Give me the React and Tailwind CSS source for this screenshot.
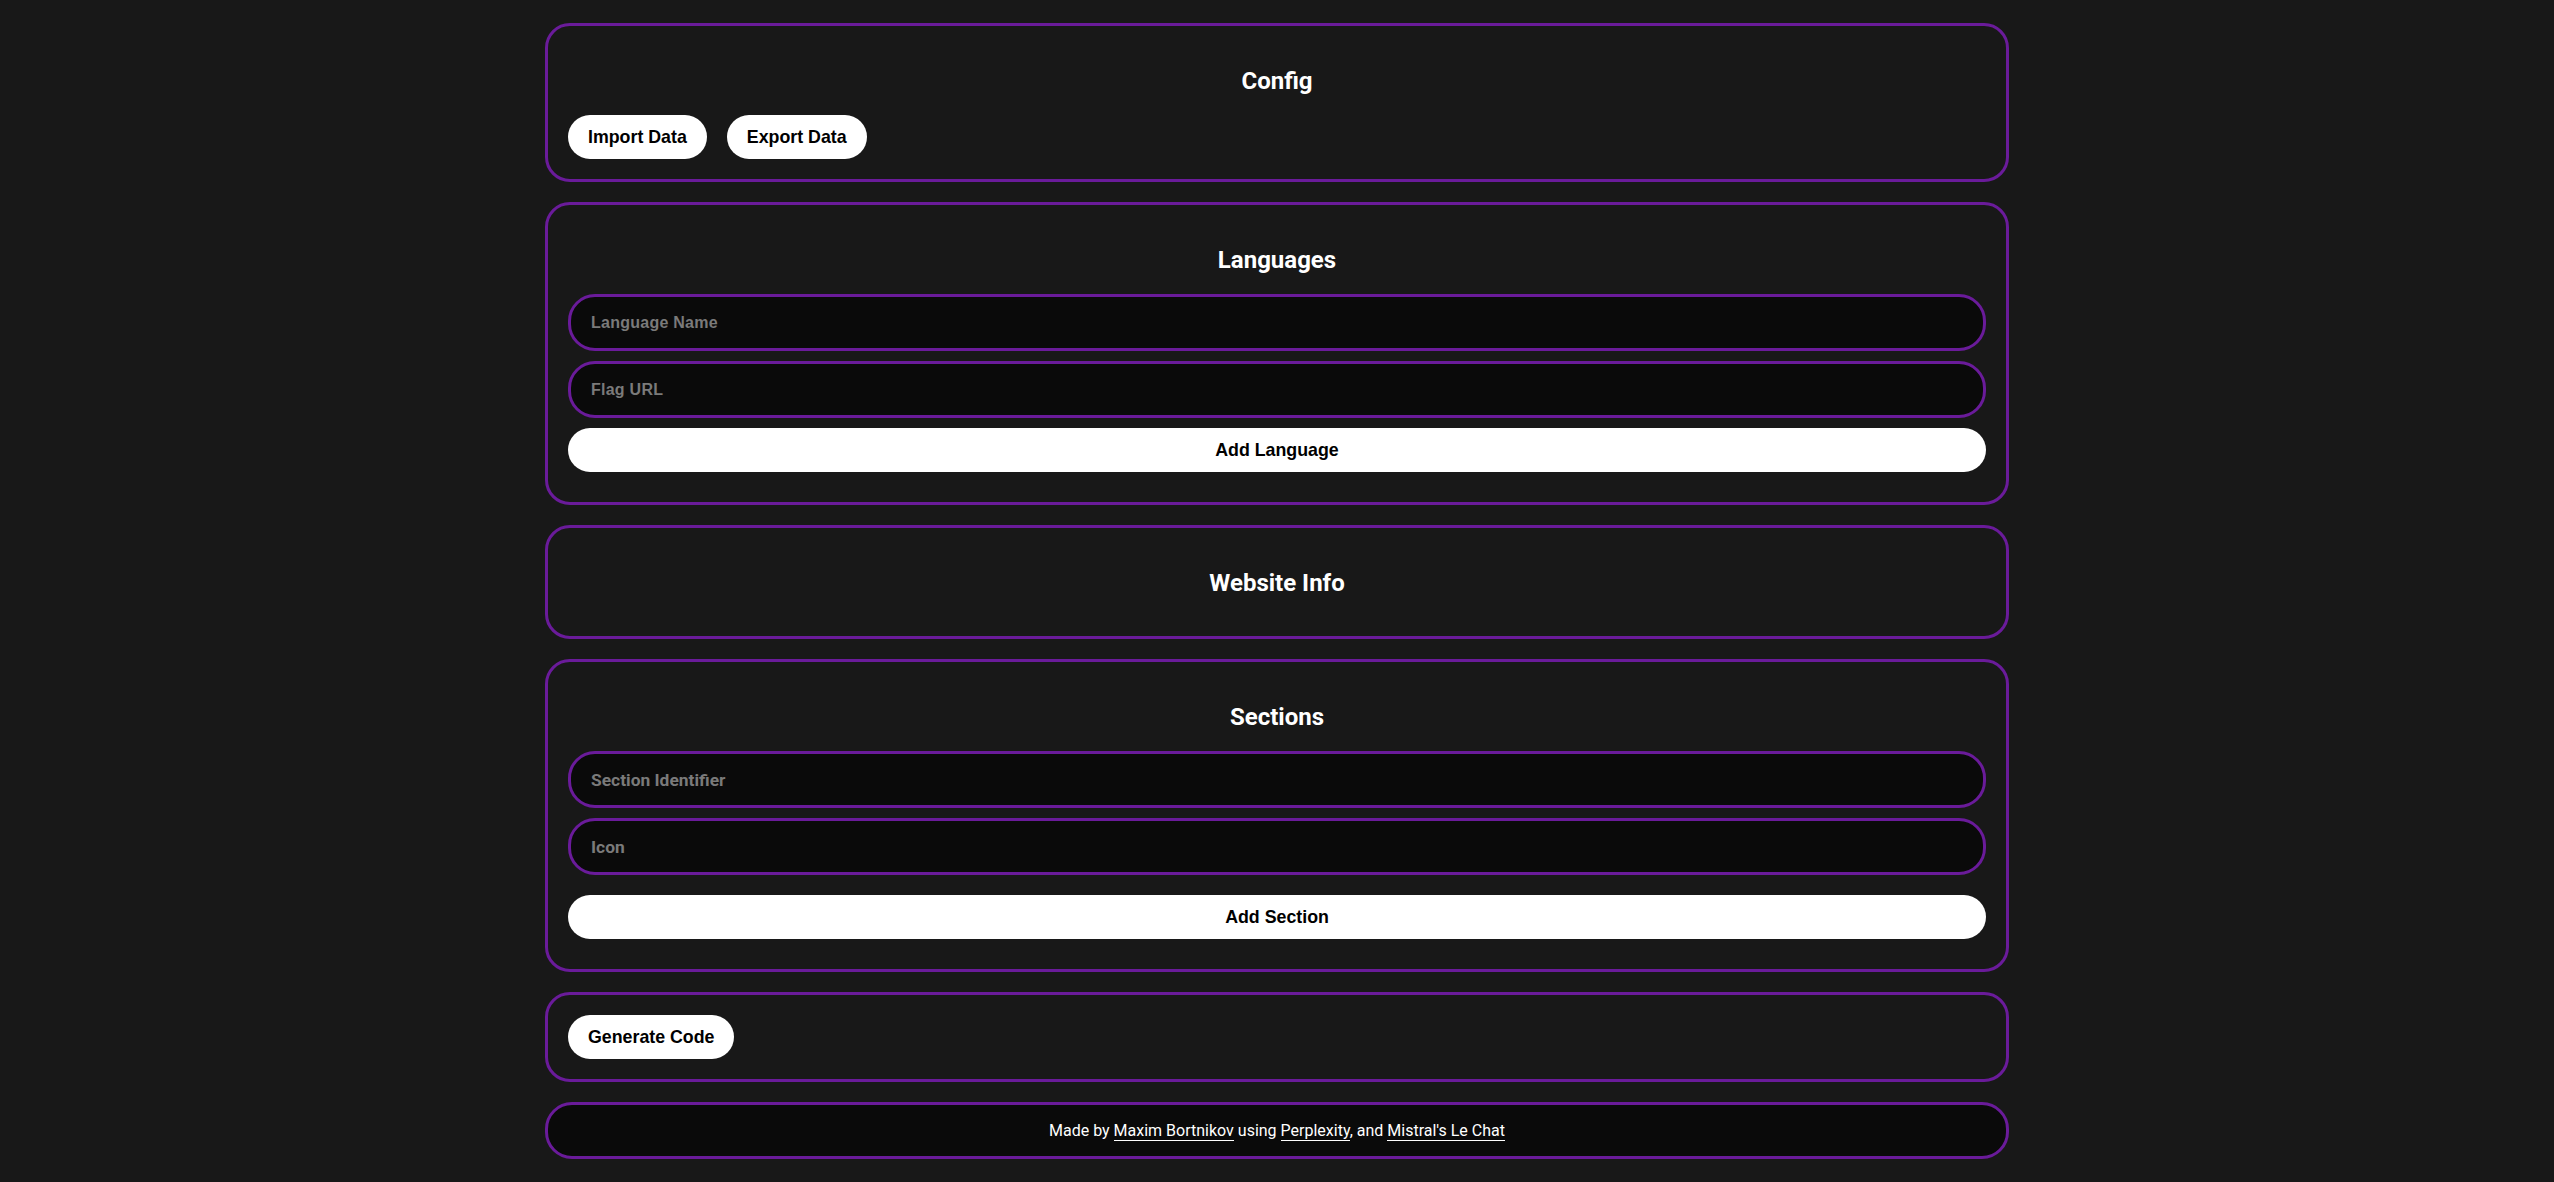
const card = "rounded-[25px] border-[3px] border-[#6a1b9a] bg-[#181818] p-5";
const btn = "h-11 rounded-full bg-white px-5 pt-px font-['Liberation_Sans',Arial,sans-serif] text-[17.8px] font-bold text-black";
const fieldBase = "block h-[57px] w-full rounded-[27px] border-[3px] border-[#6a1b9a] bg-[#0a0a0a] px-5 font-bold text-white placeholder:text-[#7a7a7a] outline-none";
const arialField = `${fieldBase} pt-0.5 font-['Liberation_Sans',Arial,sans-serif] text-[16px] tracking-[0.25px]`;
const robotoField = `${fieldBase} font-['Roboto',sans-serif] text-[17.4px]`;

const titleBase = "mt-[21px] text-center font-['Roboto',sans-serif] text-[24px] leading-[28px] font-bold text-white";

function Title({ className, children }) {
  return <h2 className={`${titleBase} ${className}`}>{children}</h2>;
}

function Credit({ children }) {
  return <a className="border-b border-white text-white" href="#">{children}</a>;
}

export default function App() {
  return (
    <div className="min-h-[1182px] bg-[#181818] pt-[23px]">
      <div className="mx-auto flex w-[1464px] flex-col gap-5">
        <section className={card}>
          <Title className="mb-[19.67px]">Config</Title>
          <div className="flex gap-5">
            <button className={btn}>Import Data</button>
            <button className={btn}>Export Data</button>
          </div>
        </section>
        <section className={card}>
          <Title className="mb-[20.33px]">Languages</Title>
          <div className="flex flex-col gap-2.5 pb-2.5">
            <input className={arialField} placeholder="Language Name" />
            <input className={arialField} placeholder="Flag URL" />
            <button className={`${btn} w-full`}>Add Language</button>
          </div>
        </section>
        <section className={card}>
          <Title className="mb-[19px]">Website Info</Title>
        </section>
        <section className={card}>
          <Title className="mb-[20.33px]">Sections</Title>
          <div className="flex flex-col gap-2.5 pb-2.5">
            <input className={robotoField} placeholder="Section Identifier" />
            <input className={robotoField} placeholder="Icon" />
            <button className={`${btn} mt-2.5 w-full`}>Add Section</button>
          </div>
        </section>
        <section className={card}>
          <button className={btn}>Generate Code</button>
        </section>
        <footer className="flex h-[56.67px] items-center justify-center rounded-[27px] border-[3px] border-[#6a1b9a] bg-[#0a0a0a] font-['Roboto',sans-serif] text-[16px] text-white">
          <p>
            Made by <Credit>Maxim Bortnikov</Credit> using <Credit>Perplexity</Credit>, and <Credit>Mistral's Le Chat</Credit>
          </p>
        </footer>
      </div>
    </div>
  );
}
